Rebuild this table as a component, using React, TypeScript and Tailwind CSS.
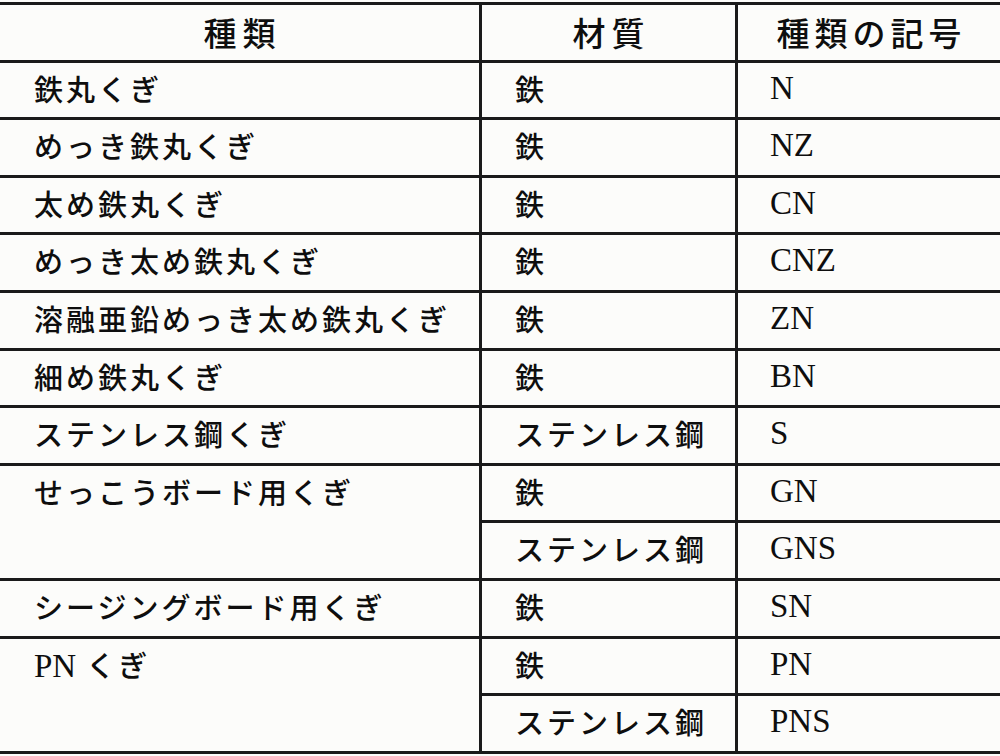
import React from "react";

const jp = "font-['Noto_Sans_CJK_JP',sans-serif]";
const serif = "font-['Liberation_Serif','Noto_Sans_CJK_JP',serif]";

type Row = { kind?: string; span?: number; mat: string; code: string };

const rows: Row[] = [
  { kind: "鉄丸くぎ", mat: "鉄", code: "N" },
  { kind: "めっき鉄丸くぎ", mat: "鉄", code: "NZ" },
  { kind: "太め鉄丸くぎ", mat: "鉄", code: "CN" },
  { kind: "めっき太め鉄丸くぎ", mat: "鉄", code: "CNZ" },
  { kind: "溶融亜鉛めっき太め鉄丸くぎ", mat: "鉄", code: "ZN" },
  { kind: "細め鉄丸くぎ", mat: "鉄", code: "BN" },
  { kind: "ステンレス鋼くぎ", mat: "ステンレス鋼", code: "S" },
  { kind: "せっこうボード用くぎ", span: 2, mat: "鉄", code: "GN" },
  { mat: "ステンレス鋼", code: "GNS" },
  { kind: "シージングボード用くぎ", mat: "鉄", code: "SN" },
  { kind: "PN", span: 2, mat: "鉄", code: "PN" },
  { mat: "ステンレス鋼", code: "PNS" },
];

function Kind({ text }: { text: string }) {
  if (text === "PN") {
    return (
      <span>
        <span className={`${serif} text-[33px] tracking-normal font-normal`}>PN</span>
        <span className="ml-[10px]">くぎ</span>
      </span>
    );
  }
  return <span>{text}</span>;
}

export default function App() {
  return (
    <div className="w-[1000px] h-[756px] bg-[#fcfcfa] text-[#0e0e0e] pt-[2px]">
      <div
        className={`grid grid-cols-[482px_256px_262px] grid-rows-[repeat(12,57.6px)_57.4px] border-t-[3px] border-[#1a1a1a] ${jp} text-[29px] tracking-[3px] leading-[40px] font-medium`}
      >
        <div className="flex items-center justify-center border-b-[3px] border-r-[3px] border-[#1a1a1a] text-[33px] tracking-[6px] pl-[6px]">
          種類
        </div>
        <div className="flex items-center justify-center border-b-[3px] border-r-[3px] border-[#1a1a1a] text-[33px] tracking-[6px] pl-[6px]">
          材質
        </div>
        <div className="flex items-center justify-center border-b-[3px] border-[#1a1a1a] text-[33px] tracking-[5px] pl-[5px]">
          種類の記号
        </div>
        {rows.map((r, i) => (
          <React.Fragment key={i}>
            {r.kind !== undefined && (
              <div
                className={`${r.span === 2 ? "row-span-2" : ""} flex items-start pt-[5px] pl-[34px] border-b-[3px] border-r-[3px] border-[#1a1a1a] whitespace-nowrap`}
              >
                <Kind text={r.kind} />
              </div>
            )}
            <div className="flex items-start pt-[5px] pl-[33px] border-b-[3px] border-r-[3px] border-[#1a1a1a] whitespace-nowrap">
              {r.mat}
            </div>
            <div className={`flex items-start pt-[5px] pl-[32px] border-b-[3px] border-[#1a1a1a] ${serif} text-[33px] tracking-normal font-normal`}>
              {r.code}
            </div>
          </React.Fragment>
        ))}
      </div>
    </div>
  );
}
